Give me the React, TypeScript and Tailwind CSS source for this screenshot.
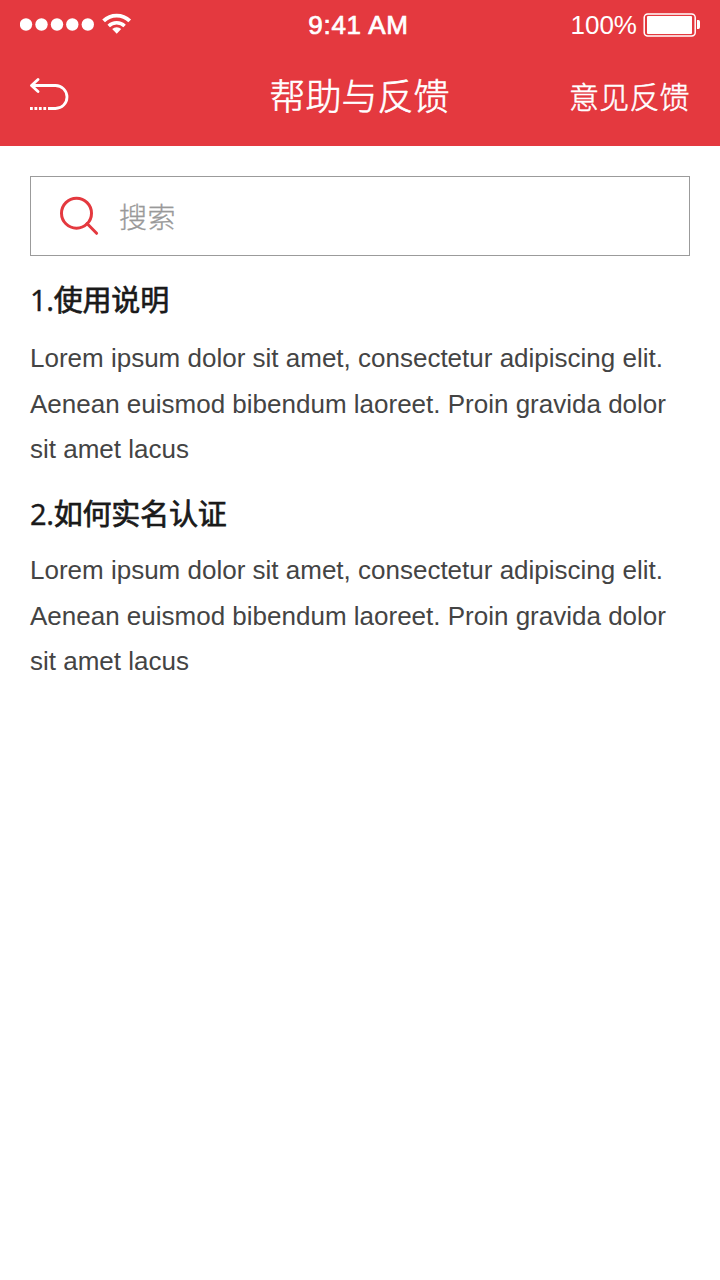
const LOREM = [
  'Lorem ipsum dolor sit amet, consectetur adipiscing elit.',
  'Aenean euismod bibendum laoreet. Proin gravida dolor',
  'sit amet lacus',
];

const sections = [
  { id: 1, index: '1.', title: '使用说明', lines: LOREM, box: 'h-[213px]', gap: 'pt-3' },
  { id: 2, index: '2.', title: '如何实名认证', lines: LOREM, box: 'pt-px', gap: 'pt-[10px]' },
];

function StatusBar() {
  return (
    <div className="flex h-12 items-center justify-between pl-5 pr-5">
      <div className="flex w-[220px] items-center">
        <svg className="h-12 w-[112px]" viewBox="0 0 112 48" fill="#fff">
          <circle cx="6" cy="24.5" r="6.2" />
          <circle cx="21.5" cy="24.5" r="6.2" />
          <circle cx="37" cy="24.5" r="6.2" />
          <circle cx="52.3" cy="24.5" r="6.2" />
          <circle cx="67.8" cy="24.5" r="6.2" />
          <path d="M92.2 29a6.4 6.4 0 0 1 9 0l-4.5 4.8z" />
          <path d="M88.7 26a11.5 11.5 0 0 1 15.9 0" fill="none" stroke="#fff" strokeWidth="3.5" />
          <path d="M83.6 20.9a18.7 18.7 0 0 1 26.1 0" fill="none" stroke="#fff" strokeWidth="3.9" />
        </svg>
      </div>
      <div className="whitespace-nowrap pr-[3px] pt-0.5 font-['Liberation_Sans',sans-serif] text-[26px] leading-[48px] tracking-[0.7px] text-white [-webkit-text-stroke:0.7px_#fff]">
        9:41 AM
      </div>
      <div className="flex w-[220px] items-center justify-end">
        <span className="mr-[6px] pt-0.5 font-['Liberation_Sans',sans-serif] text-[26px] leading-[48px] text-white">100%</span>
        <svg className="h-12 w-[57px]" viewBox="0 0 57 48" fill="none">
          <rect x="1.2" y="14" width="51" height="22" rx="3.5" stroke="#fff" strokeWidth="1.5" />
          <rect x="4" y="16" width="45" height="18" rx="1" fill="#fff" />
          <path d="M54 20h1.5q1.5 0 1.5 2v5q0 2-1.5 2H54z" fill="#fff" />
        </svg>
      </div>
    </div>
  );
}

function NavBar() {
  return (
    <div className="flex h-[98px] items-start justify-between px-[30px]">
      <button className="w-[121px]" aria-label="返回">
        <svg className="h-[98px] w-10" viewBox="0 0 40 98" fill="none" stroke="#fff" strokeWidth="2.8">
          <path d="M8 31.5L1.5 37.5L8 43.5" strokeLinecap="round" strokeLinejoin="round" />
          <path d="M2 37.5H25.5a11.5 11.5 0 0 1 0 23H18" />
          <path d="M0 60.5H17" strokeDasharray="2.8 1.65" />
        </svg>
      </button>
      <h1 className="pr-px font-['Noto_Sans_CJK_SC',sans-serif] text-[36px] font-light leading-[92px] text-white [-webkit-text-stroke:0.6px_#fff]">
        帮助与反馈
      </h1>
      <button className="w-[121px] whitespace-nowrap text-left font-['Noto_Sans_CJK_SC',sans-serif] text-[30px] font-light leading-[95px] tracking-[0.2px] text-white [-webkit-text-stroke:0.5px_#fff]">
        意见反馈
      </button>
    </div>
  );
}

function SearchBox() {
  return (
    <div className="flex h-20 items-center border border-[#9b9b9b] pl-[28px]">
      <svg className="h-[78px] w-10" viewBox="0 0 40 78" fill="none" stroke="#e4393f" strokeWidth="3">
        <circle cx="17.5" cy="36.2" r="15" />
        <path d="M28 46.5L37.6 56.3" strokeLinecap="round" />
      </svg>
      <span className="ml-5 font-['Noto_Sans_CJK_SC',sans-serif] text-[28px] font-light leading-[78px] tracking-[0.5px] text-[#999] [-webkit-text-stroke:0.3px_#999]">
        搜索
      </span>
    </div>
  );
}

export default function App() {
  return (
    <div className="min-h-[1280px] w-[720px] bg-white">
      <header className="bg-[#e4393f]">
        <StatusBar />
        <NavBar />
      </header>
      <main className="px-[30px] pt-[30px]">
        <SearchBox />
        <div className="pt-[20px]">
          {sections.map((s) => (
            <section key={s.id} className={s.box}>
              <h2 className="font-['Noto_Sans','Noto_Sans_CJK_SC',sans-serif] text-[29px] font-normal leading-[47px] tracking-[-0.2px] text-[#1a1a1a] [-webkit-text-stroke:0.7px_#1a1a1a]">
                <span className="tracking-[-0.3px] [-webkit-text-stroke:0.3px_#1a1a1a]">{s.index}</span>
                {s.title}
              </h2>
              <div className={s.gap}>
                <p className="pt-px font-['Liberation_Sans',Arial,sans-serif] text-[26px] leading-[45.5px] text-[#444]">
                  {s.lines.map((line) => (
                    <span key={line} className="block whitespace-nowrap">
                      {line}
                    </span>
                  ))}
                </p>
              </div>
            </section>
          ))}
        </div>
      </main>
    </div>
  );
}
